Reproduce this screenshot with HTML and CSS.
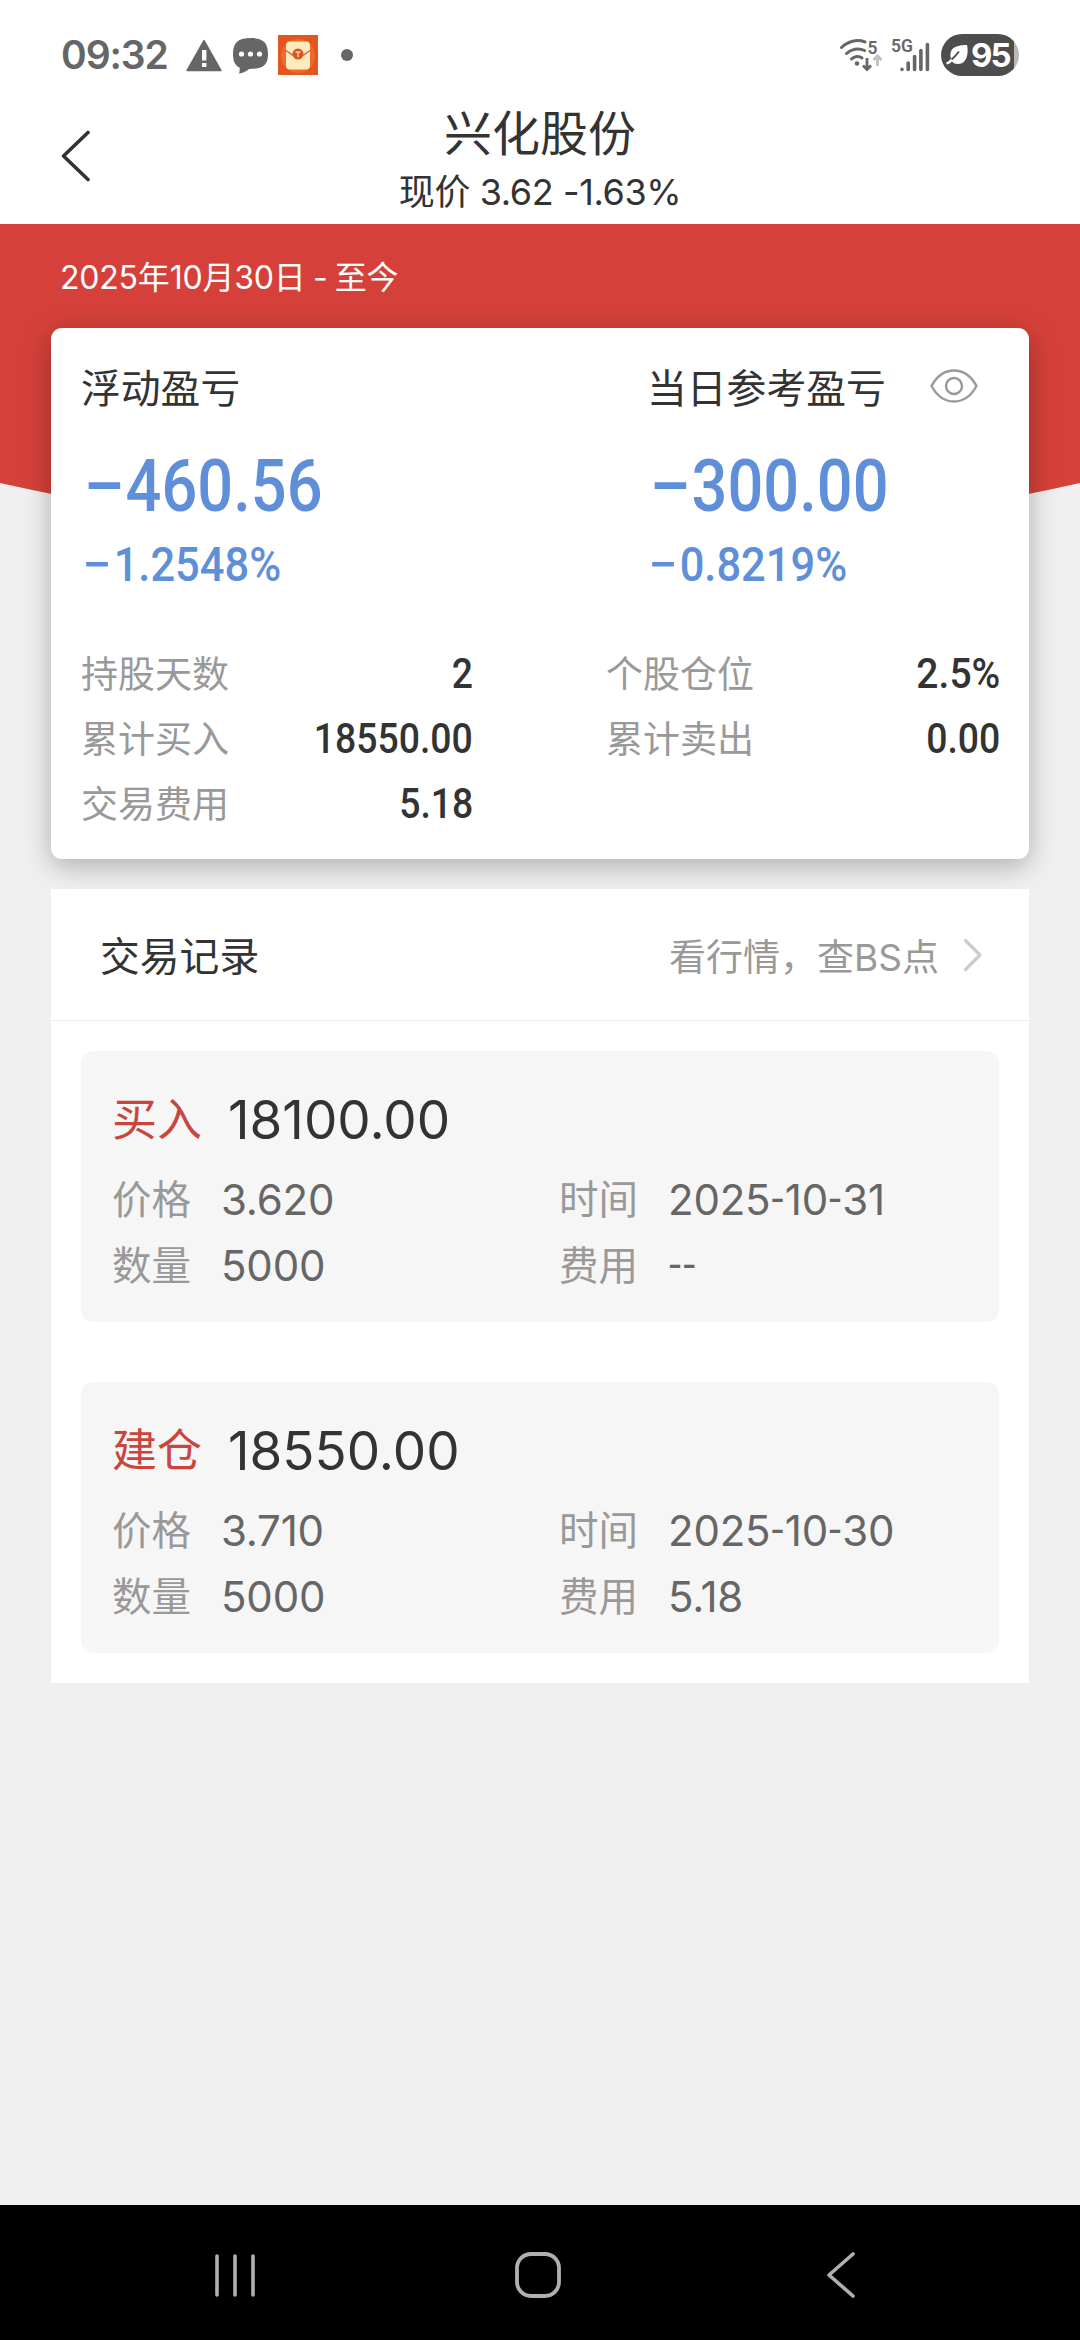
FILE: index.html
```html
<!DOCTYPE html>
<html lang="zh-CN">
<head>
<meta charset="utf-8">
<title>兴化股份</title>
<link rel="stylesheet" href="styles.css">
</head>
<body>
<div class="screen">
  <div class="statusbar">
    <span class="clock">09:32</span>
    <svg class="ic-warn" width="36" height="33" viewBox="0 0 36 33"><path d="M18 1.500L35 31.500H1Z" fill="#666" stroke="#666" stroke-width="1.500" stroke-linejoin="round"/><path d="M16 11h4.400v10.500h-4.400zM16 24h4.400v4h-4.400z" fill="#fff"/></svg>
    <svg class="ic-chat" width="37" height="37" viewBox="0 0 37 37"><path d="M18.500 1C31 1 36 5.500 36 17S31 32 17 32C14 34.500 11 36 7 36.500C7.500 35 8 33 7.500 30.500C3 28.500 1 24.500 1 17C1 5.500 6 1 18.500 1Z" fill="#666"/><g fill="#fff"><circle cx="9.500" cy="17" r="2.600"/><circle cx="18.500" cy="17" r="2.600"/><circle cx="27.500" cy="17" r="2.600"/></g></svg>
    <svg class="ic-app" width="40" height="40" viewBox="0 0 40 40"><rect width="40" height="40" fill="#e4561f"/><circle cx="20" cy="21" r="17" fill="#ec6a2c"/><rect x="8" y="6.500" width="24" height="28" rx="4" fill="#fdebbd"/><path d="M8 15.500L15 20.500M32 15.500L25 20.500" stroke="#d9562a" stroke-width="1.300" fill="none"/><circle cx="20" cy="19" r="5.500" fill="#dc5325"/><path d="M17.500 17.200h5M20 17.200v5" stroke="#fdebbd" stroke-width="1.200"/></svg>
    <span class="more-dot"></span>
    <svg class="ic-wifi" width="44" height="34" viewBox="0 0 44 34"><g fill="none" stroke="#666" stroke-width="3" stroke-linecap="round"><path d="M2.500 9.500C9 3 18 1 26 4"/><path d="M7.500 15.500C12 11 19.500 9.500 25.500 12.500"/><path d="M12.500 21C15.500 18 20 17.500 23 20"/></g><circle cx="18" cy="25.500" r="2.300" fill="#666"/><path d="M28 20v11M24 27.500l4 4 4-4" fill="none" stroke="#666" stroke-width="2.800"/><path d="M38.500 28V19M34.500 22l4-4 4 4" fill="none" stroke="#c0c0c0" stroke-width="2.800"/><text x="28.500" y="16" class="net-label">5</text></svg>
    <svg class="ic-signal" width="40" height="36" viewBox="0 0 40 36"><text x="1" y="15" class="net-label">5G</text><g stroke="#666" stroke-width="3.600" stroke-linecap="round"><path d="M12 32.400v.1M18.200 26v6.500M24.600 19.500v13M30.900 13.500v19M37.400 7.500v25"/></g></svg>
    <span class="battery"><svg width="26" height="24" viewBox="0 0 26 24"><path d="M22 2C23.500 8 23 21 13 21C9.500 21 8 19.500 7 18.500C5.500 20 4 21 2 21.500L1 19.500C3.500 18.500 5 17 6 15.500C4 7 8 2 22 2Z" fill="#fff"/><path d="M6.500 16.500C9 14.500 11 12.500 14 8.500" stroke="#4d4d4d" stroke-width="1.800" fill="none"/></svg><span class="level">95</span></span>
  </div>

  <header class="header">
    <svg class="back" width="30" height="52" viewBox="0 0 30 52"><path d="M28 2.500L3.500 26L28 49.500" fill="none" stroke="#333" stroke-width="3.600" stroke-linecap="round" stroke-linejoin="round"/></svg>
    <div class="heading">
      <h1 class="title">兴化股份</h1>
      <p class="quote">现价 <span>3.62 -1.63%</span></p>
    </div>
  </header>

  <section class="hero"><p class="period">2025年10月30日 - 至今</p></section>

  <section class="summary">
    <div class="pnl">
      <div class="pnl-col">
        <h2 class="pnl-title">浮动盈亏</h2>
        <span class="pnl-value"><span class="sign">−</span>460.56</span>
        <span class="pnl-rate"><span class="sign">−</span>1.2548%</span>
      </div>
      <div class="pnl-col">
        <h2 class="pnl-title">当日参考盈亏<svg class="eye" width="48" height="34" viewBox="0 0 48 34"><path d="M1.500 17C7 7 15 1.500 24 1.500S41 7 46.500 17C41 27 33 32.500 24 32.500S7 27 1.500 17Z" fill="none" stroke="#999" stroke-width="2.400"/><circle cx="24" cy="17" r="8" fill="none" stroke="#999" stroke-width="2.400"/></svg></h2>
        <span class="pnl-value"><span class="sign">−</span>300.00</span>
        <span class="pnl-rate"><span class="sign">−</span>0.8219%</span>
      </div>
    </div>
    <div class="stats">
      <dl class="stat"><dt>持股天数</dt><dd>2</dd></dl>
      <dl class="stat"><dt>个股仓位</dt><dd class="percent">2.5%</dd></dl>
      <dl class="stat"><dt>累计买入</dt><dd>18550.00</dd></dl>
      <dl class="stat"><dt>累计卖出</dt><dd>0.00</dd></dl>
      <dl class="stat"><dt>交易费用</dt><dd>5.18</dd></dl>
    </div>
  </section>

  <section class="records">
    <div class="records-head">
      <h2 class="records-title">交易记录</h2>
      <a class="records-link">看行情，查BS点<svg width="20" height="34" viewBox="0 0 20 34"><path d="M2.500 2.500L17 17L2.500 31.500" fill="none" stroke="#ccc" stroke-width="3.200" stroke-linecap="round" stroke-linejoin="round"/></svg></a>
    </div>
    <article class="record">
      <div class="record-top"><span class="side">买入</span><span class="amount">18100.00</span></div>
      <div class="fields">
        <dl class="field"><dt>价格</dt><dd>3.620</dd></dl>
        <dl class="field"><dt>时间</dt><dd>2025<i>-</i>10<i>-</i>31</dd></dl>
        <dl class="field"><dt>数量</dt><dd>5000</dd></dl>
        <dl class="field"><dt>费用</dt><dd><i>--</i></dd></dl>
      </div>
    </article>
    <article class="record">
      <div class="record-top"><span class="side">建仓</span><span class="amount">18550.00</span></div>
      <div class="fields">
        <dl class="field"><dt>价格</dt><dd>3.710</dd></dl>
        <dl class="field"><dt>时间</dt><dd>2025<i>-</i>10<i>-</i>30</dd></dl>
        <dl class="field"><dt>数量</dt><dd>5000</dd></dl>
        <dl class="field"><dt>费用</dt><dd>5.18</dd></dl>
      </div>
    </article>
  </section>

  <nav class="navbar">
    <svg width="44" height="48" viewBox="0 0 44 48"><path d="M4 5v39M22 5v39M40 5v39" stroke="#b0b0b0" stroke-width="3.600" stroke-linecap="round"/></svg>
    <svg width="48" height="48" viewBox="0 0 48 48"><rect x="3" y="3" width="42" height="42" rx="14" fill="none" stroke="#b0b0b0" stroke-width="3.800"/></svg>
    <svg width="30" height="48" viewBox="0 0 30 48"><path d="M27 3L3 24L27 45" fill="none" stroke="#b0b0b0" stroke-width="3.600" stroke-linecap="round" stroke-linejoin="round"/></svg>
  </nav>
</div>
</body>
</html>
```
FILE: styles.css
```css
* { box-sizing: border-box; margin: 0; padding: 0; }
body { background: #f0f0f0; font-family: Inter, "Noto Sans CJK SC", sans-serif; color: #333; }
h1, h2 { font-weight: 400; }
i { font-family: "Liberation Sans", sans-serif; font-style: normal; letter-spacing: 0.3px; vertical-align: 3px; line-height: 1; }
svg { display: block; flex: none; }
.screen { width: 1080px; height: 2340px; display: flex; flex-direction: column; overflow: hidden; }

.statusbar { height: 90px; background: #fff; display: flex; align-items: center; padding: 20px 61px 0 61px; flex: none; }
.clock { font-size: 39px; font-weight: 600; color: #666; line-height: 50px; width: 125px; letter-spacing: -1.1px; }
.ic-chat { margin-left: 10px; }
.ic-app { margin-left: 9px; }
.more-dot { width: 12px; height: 12px; border-radius: 50%; background: #666; margin-left: 23px; }
.ic-wifi { margin-left: auto; }
.ic-signal { margin-left: 7px; }
.net-label { font: 600 17.5px Roboto, sans-serif; fill: #666; }
.battery { width: 78px; height: 42px; border-radius: 21px; margin-left: 11px; display: flex; align-items: center; padding-left: 4px; background: linear-gradient(90deg, #4d4d4d 73px, #b8b8b8 73px); color: #fff; }
.level { font-size: 33px; font-weight: 700; letter-spacing: -2px; }

.header { height: 134px; background: #fff; display: grid; grid-template-columns: 120px 1fr 120px; flex: none; }
.back { margin: 40px 0 0 60px; }
.heading { text-align: center; padding-top: 15px; }
.title { font-size: 48px; line-height: 58px; }
.quote { font-size: 36px; line-height: 59px; letter-spacing: -0.4px; }

.hero { height: 312px; flex: none; padding: 26px 60px; background: #d5413a; clip-path: path("M0 0H1080V259Q540 380 0 259Z"); }
.period { color: #fff; font-size: 32px; line-height: 56px; letter-spacing: -0.2px; word-spacing: -1.500px; }

.summary { position: relative; margin: -208px 51px 0; height: 531px; flex: none; background: #fff; border-radius: 11px; box-shadow: 0 7px 28px rgba(0, 0, 0, 0.28); padding: 33px 30px 0; }
.pnl { display: grid; grid-template-columns: 566px 1fr; }
.pnl-col { display: flex; flex-direction: column; align-items: flex-start; }
.pnl-title { display: flex; align-items: center; font-size: 39.800px; line-height: 56px; }
.eye { margin: -6px 0 0 44px; }
.pnl-value, .pnl-rate { font-family: Roboto, sans-serif; font-weight: 500; color: #5f8fd8; transform-origin: left; }
.pnl-value { font-size: 71.500px; line-height: 84px; margin: 28px 0 0 2px; transform: scaleX(0.883); }
.pnl-rate { font-size: 48px; line-height: 56px; margin: 8px 0 0 1px; transform: scaleX(0.905); }
.sign { display: inline-block; margin-right: 8px; transform: scaleX(1.2); transform-origin: left; }
.stats { display: grid; grid-template-columns: 391px 393px; column-gap: 134px; margin-top: 48px; }
.stat { display: flex; justify-content: space-between; line-height: 65px; }
.stat dt { font-size: 37px; color: #999; padding-top: 1px; height: 65px; }
.stat dd { font-family: Roboto, sans-serif; font-weight: 500; font-size: 42px; transform: translateX(1px) scaleX(0.89); transform-origin: right; }
.stat .percent { transform: translateX(1px) scaleX(0.93); }

.records { position: relative; margin: 30px 51px 0; height: 794px; flex: none; background: #fff; }
.records-head { height: 132px; border-bottom: 1px solid #ededed; display: flex; align-items: center; justify-content: space-between; padding: 0 46px 0 49px; }
.records-title { font-size: 39.800px; padding-bottom: 2px; }
.records-link { display: flex; align-items: center; gap: 24px; font-size: 37px; color: #999; }
.record { margin: 30px 30px 60px; height: 271px; border-radius: 12px; background: #f6f6f6; padding: 34px 31px 0; }
.record-top { display: flex; align-items: center; line-height: 70px; height: 70px; }
.side { font-size: 45px; color: #c8463f; width: 116px; }
.amount { font-size: 53px; }
.fields { display: grid; grid-template-columns: 447px 1fr; margin-top: 12px; }
.field { display: flex; align-items: center; line-height: 66px; height: 66px; }
.field dt { font-size: 39.500px; color: #999; width: 109px; }
.field dd { font-size: 42px; color: #666; letter-spacing: -0.2px; padding-bottom: 1px; }

.navbar { height: 135px; margin-top: auto; background: #000; display: grid; grid-template-columns: 44px 48px 30px; column-gap: 257px; align-items: center; padding: 4px 0 0 213px; flex: none; }
.navbar svg:last-child { margin-left: 7px; }
```
